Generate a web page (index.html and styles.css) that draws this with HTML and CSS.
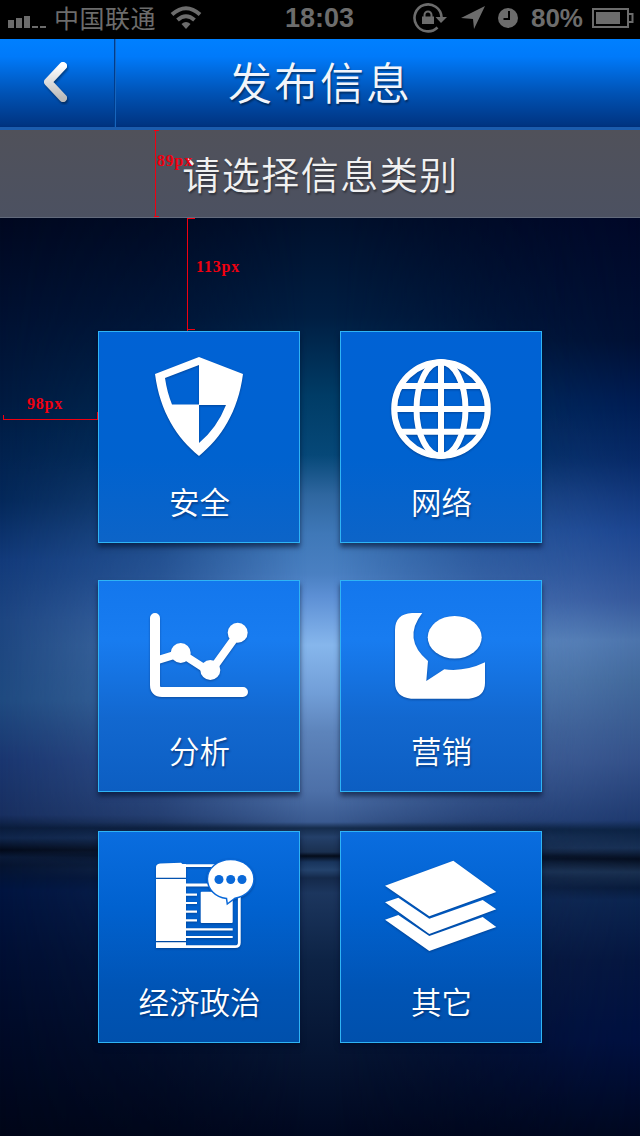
FILE: index.html
```html
<!DOCTYPE html>
<html lang="zh-CN">
<head>
<meta charset="utf-8">
<title>发布信息</title>
<link rel="stylesheet" href="styles.css">
</head>
<body>
<div class="screen">
  <div class="status">
    <div class="status-left">
      <svg class="signal" width="39" height="12" viewBox="0 0 39 12"><path d="M0 4h6v8H0zM8 2h6v10H8zM16 0h6v12h-6zM24 10h6v2h-6zM32 10h6v2h-6z"/></svg>
      <span class="carrier">中国联通</span>
      <svg class="wifi" width="32" height="24" viewBox="0 0 32 24"><g fill="none" stroke="#6c6c6c" stroke-width="4"><path d="M2 8.500Q16-4 30 8.500"/><path d="M7.500 14Q16 6.500 24.500 14"/></g><path d="M16 23l-4.500-5q4.500-4 9 0z"/></svg>
    </div>
    <span class="clock">18:03</span>
    <div class="status-right">
      <svg width="34" height="30" viewBox="0 0 34 30"><path d="M24.500 24.500A13.500 13.500 0 1 1 28.500 14" fill="none" stroke="#6c6c6c" stroke-width="2.600"/><path d="M22.500 14H34l-6 6z"/><path d="M9 13.500h12V21H9z"/><path d="M11.500 14v-2a3.500 3.500 0 0 1 7 0v2" fill="none" stroke="#6c6c6c" stroke-width="2"/></svg>
      <svg class="arrow" width="24" height="24" viewBox="0 0 24 24"><path d="M24 0L13 23l-1-10L0 12z"/></svg>
      <svg class="alarm" width="20" height="20" viewBox="0 0 20 20"><circle cx="10" cy="10" r="10"/><path d="M11 3v8H5.500" fill="none" stroke="#000" stroke-width="2"/></svg>
      <span class="percent">80%</span>
      <svg class="battery" width="42" height="20" viewBox="0 0 42 20"><path d="M1 1h35v18H1zM36 6h4.500v8H36" fill="none" stroke="#6c6c6c" stroke-width="2"/><path d="M4 4h24v12H4z"/></svg>
    </div>
  </div>
  <header class="navbar">
    <div class="back">
      <svg width="32" height="46" viewBox="0 0 32 46">
        <defs><linearGradient id="chevron" x1="0" y1="0" x2="0" y2="1"><stop offset="0" stop-color="#fff"/><stop offset="1" stop-color="#bbb"/></linearGradient></defs>
        <path class="chevron" d="M24 7L9 23l15 16" fill="none" stroke="url(#chevron)" stroke-width="8" stroke-linecap="round" stroke-linejoin="round"/>
      </svg>
    </div>
    <h1 class="title">发布信息</h1>
  </header>
  <div class="prompt">请选择信息类别</div>
  <main class="tiles">
    <div class="tile t1">
      <svg width="200" height="140" viewBox="0 0 200 140"><path fill-rule="evenodd" d="M100 25L144 42C139 80 122 106 100 124C78 106 61 80 56 42zM100 33L66 46Q68 60 73 72.500H100zM100 73V111Q118 96 127 73z"/></svg>
      <span class="label">安全</span>
    </div>
    <div class="tile t1">
      <svg width="200" height="140" viewBox="0 0 200 140"><g fill="none" stroke="#fff" stroke-width="6"><circle cx="100" cy="77" r="46.800"/><ellipse cx="100" cy="77" rx="24.500" ry="47"/><path d="M100 30v94M54 77h92M60 54h80M60 99.700h80"/></g></svg>
      <span class="label">网络</span>
    </div>
    <div class="tile t2">
      <svg width="200" height="140" viewBox="0 0 200 140"><g fill="none" stroke="#fff"><path d="M56 37V104q0 7 7 7h81" stroke-width="10" stroke-linecap="round"/><path d="M59 79L81.700 72 111.300 91 138.700 53" stroke-width="8"/></g><circle cx="81.700" cy="72" r="10"/><circle cx="111.300" cy="89" r="10"/><circle cx="138.700" cy="51.700" r="10"/></svg>
      <span class="label">分析</span>
    </div>
    <div class="tile t2">
      <svg width="200" height="140" viewBox="0 0 200 140"><path d="M81.300 32H71Q54 33 54 49V101Q54 116 70 117.700H128Q144 116 144 102V81.300Q124 91 103.300 88.300L85.300 100 87 80Q61 58 81.300 32z"/><ellipse cx="113.700" cy="56.300" rx="27" ry="21.300"/></svg>
      <span class="label">营销</span>
    </div>
    <div class="tile t3">
      <svg width="200" height="140" viewBox="0 0 200 140">
        <path d="M57 45.800V35q0-3 4-3.500L82 30.800q1 1 1.500 1.200H87v13.800zM57 46.900h30V109H57zM57 110.300h30V116H57z"/>
        <path d="M87 33.700h30M87 53h24M87 114.700h49q4.300 0 4.300-4V62" fill="none" stroke="#fff" stroke-width="2.800"/>
        <path d="M87 62.700h11M87 71h11M87 79.700h11M87 88.300h11M87 97.300h46.700M87 105h46.700" stroke="#fff" stroke-width="2.200"/>
        <rect x="101.700" y="59.700" width="32" height="31.300" rx="1"/>
        <path class="bubble" d="M131.700 27.500c13 0 23.300 8.700 23.300 19.500 0 9.500-8 17.500-19 19.200L128.300 72l-.8-5.500C116 65 108.400 57 108.400 47c0-10.800 10.300-19.500 23.300-19.500z"/>
        <g fill="#0968d8"><circle cx="120" cy="47.500" r="4.500"/><circle cx="131.700" cy="47.500" r="4.500"/><circle cx="143" cy="47.500" r="4.500"/></g>
      </svg>
      <span class="label">经济政治</span>
    </div>
    <div class="tile t3">
      <svg width="200" height="140" viewBox="0 0 200 140"><path d="M112.300 28.700L155.300 60 88.300 84.300 44 53.700zM44 70.300L57.300 65.700 88.300 86.700 141.700 68 155.300 77.300 88.300 102zM44 87.700L57.300 83 88.300 104 141.700 85 155.300 95 88.300 119z"/></svg>
      <span class="label">其它</span>
    </div>
  </main>
  <div class="measure bar-height"><span>89px</span></div>
  <div class="measure top-gap"><span>113px</span></div>
  <div class="measure side-gap"><span>98px</span></div>
</div>
</body>
</html>
```
FILE: styles.css
```css
* { box-sizing: border-box; }
body {
  margin: 0;
  font-family: "Noto Sans CJK SC", sans-serif;
}
svg { display: block; flex: none; }
.screen {
  position: relative;
  isolation: isolate;
  display: flex;
  flex-direction: column;
  width: 640px;
  height: 1136px;
  overflow: hidden;
  background: linear-gradient(180deg, #000820 218px, #001030 310px, #001a40 400px, #04285a 500px, #123a7a 560px, #1d4581 620px, #1f4a80 700px, #1a3670 760px, #182f60 815px, #0a1c3c 828px, #10264c 838px, #030a1a 850px, #0a1a38 857px, #061430 865px, #001440 890px, #000f34 950px, #000a26 1040px, #000618 1136px);
}
.screen::before, .screen::after {
  content: "";
  position: absolute;
  inset: 0;
  z-index: -1;
}
.screen::before {
  background: linear-gradient(180deg, #000828 218px, #001034 340px, #001c52 400px, #082a68 460px, #1c4590 530px, #36599c 600px, #4c74ac 640px, #42699c 680px, #34518a 760px, #1f3a70 820px, #0c2344 830px, #183055 848px, #050e20 859px, #1a3050 872px, #081b3c 888px, #0b2450 900px, #051640 960px, #001040 1040px, #000820 1136px);
  -webkit-mask-image: linear-gradient(90deg, transparent 45%, #000 90%);
  mask-image: linear-gradient(90deg, transparent 45%, #000 90%);
}
.screen::after {
  background: linear-gradient(180deg, #00102c 218px, #001e42 317px, #003c66 396px, #064878 455px, #2f67a0 495px, #3f78b8 534px, #4a80c2 574px, #5d90d5 597px, #86b6ec 645px, #729fd8 692px, #5d84bb 732px, #4d70a8 791px, #3a5a90 822px, #152c4c 828px, #24406a 837px, #1a3050 852px, #040c1a 856px, #18345c 862px, #24436d 870px, #14294a 878px, #1c365e 893px, #0d2345 960px, #061634 1043px, #000820 1136px);
  -webkit-mask-image: linear-gradient(90deg, transparent, rgba(0,0,0,.35) 25%, #000 48%, #000 52%, rgba(0,0,0,.4) 75%, transparent);
  mask-image: linear-gradient(90deg, transparent, rgba(0,0,0,.35) 25%, #000 48%, #000 52%, rgba(0,0,0,.4) 75%, transparent);
}
.status {
  display: grid;
  grid-template-columns: 1fr auto 1fr;
  align-items: center;
  height: 39px;
  padding: 0 6px 3px 8px;
  background: #000;
  color: #6c6c6c;
  fill: #6c6c6c;
}
.status-left, .status-right { display: flex; align-items: center; }
.status-right { justify-content: flex-end; }
.signal { margin: 8px 7px 0 0; }
.carrier { margin-top: -2px; font-size: 25px; line-height: 36px; letter-spacing: .5px; }
.wifi { margin-left: 14px; }
.clock, .percent { font: bold 27px/36px "Liberation Sans", sans-serif; }
.clock { margin-right: 3px; }
.percent { margin: 0 0 0 13px; font-size: 26px; }
.arrow { margin-left: 14px; }
.alarm { margin-left: 13px; }
.battery { margin-left: 9px; }
.navbar {
  display: flex;
  height: 91px;
  border-bottom: 3px solid #1c5cad;
  background: linear-gradient(#0080ff, #007afa 20%, #0052b4 62%, #003583 97%, #00307b);
}
.back {
  display: flex;
  align-items: center;
  width: 116px;
  padding-left: 39px;
  box-shadow: inset -1px 0 #1765bd, inset -2px 0 #003d8d;
}
.back svg { margin-top: -2px; }
.chevron { filter: drop-shadow(1px 2px 1px rgba(0,0,0,.4)); }
.title {
  flex: 1;
  margin: -1px 0 0;
  padding-right: 116px;
  color: #f2f5fb;
  font-size: 44px;
  font-weight: 350;
  line-height: 87px;
  letter-spacing: 2px;
  text-align: center;
  text-shadow: 1px 2px 2px rgba(0,0,0,.45);
}
.prompt {
  height: 88px;
  border-bottom: 1px solid #626a7c;
  background: linear-gradient(#50515a, #4c5161);
  color: #f1f1f1;
  font-size: 38px;
  font-weight: 350;
  line-height: 85px;
  letter-spacing: 1.500px;
  text-align: center;
  text-indent: 1px;
  text-shadow: 1px 2px 2px rgba(0,0,0,.4);
}
.tiles {
  display: grid;
  grid-template-columns: 202px 202px;
  grid-template-rows: 212px 212px 214px;
  gap: 37px 40px;
  align-items: end;
  padding: 113px 98px 0;
}
.tile {
  display: flex;
  flex-direction: column;
  height: 212px;
  border: 1px solid #2fb4f5;
  box-shadow: 0 4px 5px rgba(0,12,40,.6);
  fill: #fff;
}
.t1 { background: linear-gradient(#0062d5, #0062cf 60%, #0c64c8); }
.t2 { background: linear-gradient(#1377ed, #187cf0 28%, #1268d0 65%, #0c5ec2); }
.t3 { background: linear-gradient(#0a6ddf, #0162d0 35%, #0054b5 75%, #0050ac); }
.tile svg { filter: drop-shadow(0 1px 1px rgba(0,35,90,.45)); }
.bubble { stroke: #0968d8; stroke-width: 1.500px; }
.label {
  color: #fff;
  font-size: 30.500px;
  font-weight: 350;
  line-height: 58px;
  text-align: center;
  text-indent: 1px;
  text-shadow: 1px 2px 2px rgba(0,30,80,.5);
}
.measure {
  position: absolute;
  background: #f00010;
  color: #f00010;
  font: bold 16px/16px "Liberation Serif", serif;
  letter-spacing: .8px;
}
.measure span { position: absolute; }
.measure::before, .measure::after {
  content: "";
  position: absolute;
  background: #f00010;
}
.bar-height { left: 155px; top: 130px; width: 1px; height: 87px; }
.bar-height::before { width: 5px; height: 1px; top: 0; left: -1px; }
.bar-height::after { width: 5px; height: 1px; bottom: 0; left: -1px; }
.bar-height span { left: 2px; top: 23px; }
.top-gap { left: 187px; top: 218px; width: 1px; height: 113px; }
.top-gap::before { width: 8px; height: 1px; top: 0; left: 0; }
.top-gap::after { width: 8px; height: 1px; bottom: 1px; left: 0; }
.top-gap span { left: 9px; top: 41px; }
.side-gap { left: 3px; top: 419px; width: 95px; height: 1px; }
.side-gap::before { width: 1px; height: 5px; bottom: 0; left: 0; }
.side-gap::after { width: 1px; height: 8px; bottom: 0; right: 0; }
.side-gap span { left: 24px; top: -23px; }
```
